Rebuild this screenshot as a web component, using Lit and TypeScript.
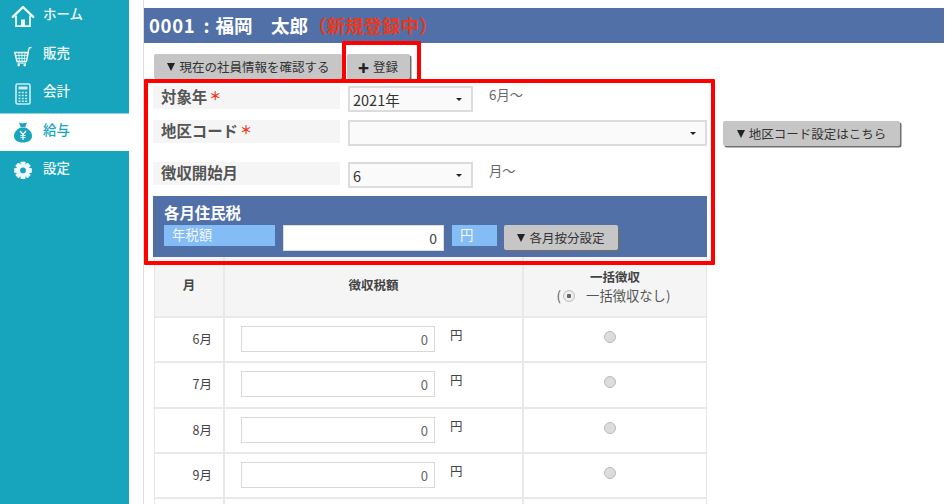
import { LitElement, html, css, svg } from "lit";
import { customElement } from "lit/decorators.js";

const TEETH = [0, 45, 90, 135, 180, 225, 270, 315];

const ICONS: Record<string, unknown> = {
  home: svg`<svg class="ic" viewBox="0 0 24 24" width="24" height="24"><path d="M1.800 12.800 12 3l10.200 9.800" fill="none" stroke="currentColor" stroke-width="2.400" stroke-linecap="round" stroke-linejoin="round"/><path d="M5 11.500V22.200h14V11.500" fill="none" stroke="currentColor" stroke-width="1.800"/><rect x="10" y="15.500" width="4" height="6.700" fill="currentColor"/></svg>`,
  cart: svg`<svg class="ic" viewBox="-2 -4 28 28" width="24" height="24"><path d="M16.500 9l1.500-3 1.500-4.500H22" fill="none" stroke="currentColor" stroke-width="1.500"/><path d="M2.500 7h15.500l-2 10.500H5z" fill="none" stroke="currentColor" stroke-width="1.800"/><path d="M7.200 7l.5 10.500M10.800 7v10.500M14.300 7l-.8 10.500M3.500 10.500h13.500M4.200 14h12" stroke="currentColor" stroke-width="1" fill="none"/><path d="M5.500 19.500h10" stroke="currentColor" stroke-width="1.200"/><circle cx="7" cy="21.800" r="1.500" fill="currentColor"/><circle cx="14" cy="21.800" r="1.500" fill="currentColor"/></svg>`,
  calc: svg`<svg class="ic calc" viewBox="0 -1 24 24" width="24" height="24"><rect x="5" y="2" width="14" height="20" rx="1.500" fill="none" stroke="currentColor" stroke-width="1.600"/><rect x="7.500" y="4.500" width="9" height="3" fill="currentColor"/><path d="M7.500 10.500h9M7.500 13.500h9M7.500 16.500h9M7.500 19.200h9" stroke="currentColor" stroke-width="1.500" stroke-dasharray="2 1.300"/></svg>`,
  bag: svg`<svg class="ic" viewBox="0 0 24 24" width="24" height="24"><path d="M8 2.500c2 1 6 1 8 0l-1.800 4.500h-4.400z" fill="currentColor"/><path d="M9.500 7.500h5c4 2 6.500 5 6.500 8.500 0 4-3.500 6.500-9 6.500S3 20 3 16c0-3.500 2.500-6.500 6.500-8.500z" fill="currentColor"/><path d="M9 11l3 3.500 3-3.500M12 14.500V20M9.500 15.500h5M9.500 17.500h5" stroke="#fff" stroke-width="1.200" fill="none"/></svg>`,
  gear: svg`<svg class="ic" viewBox="-4 -4.500 32 32" width="24" height="24"><g fill="currentColor">${TEETH.map(
    (a) => svg`<rect x="9" y="0.500" width="6" height="23" rx=".8" transform="rotate(${a} 12 12)"/>`
  )}<circle cx="12" cy="12" r="8.500"/></g><circle cx="12" cy="12" r="3.800" fill="#17a5bd"/></svg>`,
};

const NAV = [
  ["home", "ホーム"],
  ["cart", "販売"],
  ["calc", "会計"],
  ["bag", "給与"],
  ["gear", "設定"],
];
const MONTHS = ["6月", "7月", "8月", "9月"];

@customElement("app-root")
export class AppRoot extends LitElement {
  static styles = css`
    :host {
      display: block;
      position: relative;
      width: 952px;
      height: 504px;
      overflow: hidden;
      background: #fff;
      font-family: "Noto Sans CJK JP", "Noto Sans", sans-serif;
      color: #444;
      font-size: 12px;
    }
    .app { display: flex; height: 504px; }
    .side {
      width: 129px;
      flex: none;
      background: #17a5bd;
      color: #f0fafc;
    }
    .nav { margin-top: -3px; }
    .nav-item {
      height: 38.500px;
      display: flex;
      align-items: center;
      gap: 8px;
      padding-left: 11px;
      font-size: 13.500px;
      font-weight: 500;
      box-sizing: border-box;
    }
    .nav-item.on {
      background: #fff;
      color: #17a5bd;
      border-top: 1px solid #8fd3df;
    }
    .nav-item span { position: relative; top: -3px; }
    .ic { flex: none; display: block; }
    .calc { opacity: .85; }
    .main {
      margin-left: 14px;
      width: 801px;
      flex: none;
      border-left: 1px solid #ddd;
      padding-top: 8px;
      box-sizing: border-box;
    }
    .title {
      height: 35px;
      background: #5170a8;
      color: #fff;
      font-size: 18.500px;
      font-weight: 700;
      display: flex;
      align-items: center;
      padding: 0 0 2px 5px;
      box-sizing: border-box;
      white-space: pre;
    }
    .title b { font-weight: 700; letter-spacing: .7px; margin-right: 8px; }
    .title i { font-style: normal; margin-right: 6px; }
    .title em { font-style: normal; color: #e8391d; }
    .actions {
      display: flex;
      gap: 5px;
      padding: 11px 0 0 10px;
      height: 26px;
      box-sizing: content-box;
    }
    .btn {
      height: 25px;
      box-sizing: border-box;
      display: inline-flex;
      align-items: center;
      justify-content: center;
      gap: 4px;
      background: #c6c6c6;
      border-radius: 2px;
      border: 0;
      box-shadow: 1.500px 1.500px 0 #6f6f6f;
      color: #333;
      font-size: 12.500px;
      font-family: inherit;
      white-space: nowrap;
      padding: 0;
    }
    .tri { width: 0; height: 0; border: 4.500px solid transparent; border-top: 8px solid #222; border-bottom: 0; }
    .plus { font-weight: 900; font-size: 18px; line-height: 1; color: #222; }
    .b1 { width: 188px; padding-left: 1px; }
    .b2 { width: 63px; padding-right: 1px; }
    .b3 { width: 177px; }
    .b4 { width: 114px; }
    .form { padding: 6px 0 0 9px; }
    .row {
      display: flex;
      align-items: flex-start;
      gap: 8px;
    }
    .r1 { height: 34px; }
    .r2 { height: 42px; }
    .r3 { height: 34px; }
    .label {
      width: 187px;
      height: 23px;
      background: #f5f5f5;
      color: #555;
      font-size: 15.400px;
      font-weight: 700;
      line-height: 21px;
      padding: 0 0 3px 8px;
      box-sizing: border-box;
      flex: none;
      display: flex;
      align-items: center;
    }
    .req { color: #e8391d; font-size: 12px; font-weight: 700; margin-left: 2px; line-height: 1; }
    .select {
      height: 26px;
      box-sizing: border-box;
      border: 2px solid #dcdcdc;
      background: #fafafa;
      font-size: 14.500px;
      color: #333;
      display: flex;
      align-items: center;
      padding: 0 9px 0 3px;
      flex: none;
    }
    .select::after {
      content: "";
      margin-left: auto;
      border: 3px solid transparent;
      border-top: 3px solid #222;
      border-bottom: 0;
    }
    .s1, .s3 { width: 125px; }
    .s2 { width: 359px; }
    .note { font-size: 13.300px; color: #666; margin-left: 8px; line-height: 18px; }
    .r2 .btn { margin-left: 8px; margin-top: 1px; }
    .band {
      width: 554px;
      height: 61px;
      background: #5170a8;
      box-sizing: border-box;
      padding: 6px 0 0 11px;
      color: #fff;
    }
    .band h3 { margin: 0 0 2px; font-size: 15.400px; line-height: 21px; font-weight: 700; }
    .band-row { display: flex; align-items: flex-start; height: 26px; }
    .chip {
      height: 21px;
      background: #84bcf5;
      color: #f4f9ff;
      font-size: 13.400px;
      line-height: 18px;
      box-sizing: border-box;
      padding-left: 8px;
    }
    .c1 { width: 111px; }
    .c2 { width: 45px; }
    .yen-in {
      width: 161px;
      height: 26px;
      box-sizing: border-box;
      margin: 0 8px 0 8px;
      background: #fff;
      border: 1px solid #ddd;
      color: #444;
      font-size: 14px;
      text-align: right;
      line-height: 25px;
      padding-right: 6px;
    }
    .band .btn { margin-left: 7px; }
    .table {
      margin-left: 1px;
      width: 551px;
      display: grid;
      grid-template-columns: 68px 299px 184px;
      grid-template-rows: 61px repeat(4, 45.300px) 20px;
      border-left: 1px solid #e6e6e6;
      border-right: 1px solid #e6e6e6;
      box-sizing: content-box;
    }
    .cell {
      border-bottom: 2px solid #e9e9e9;
      box-sizing: border-box;
      min-width: 0;
    }
    .cell + .cell { border-left: 2px solid #e9e9e9; }
    .m { border-left: 0 !important; }
    .blank-first { border-left: 0 !important; }
    .head {
      background: #f5f5f5;
      font-size: 12.500px;
      font-weight: 700;
      display: flex;
      flex-direction: column;
      align-items: center;
      justify-content: center;
      color: #444;
    }
    .head-mid { padding-bottom: 4px; }
    .head-last {
      line-height: 19px;
      justify-content: flex-start;
      padding: 10px 0 0 0;
      white-space: nowrap;
    }
    .head-last .opt {
      display: flex;
      align-items: center;
      gap: 2px;
      padding-right: 3px;
      font-weight: 400;
      font-size: 13.300px;
      color: #555;
    }
    .dot-gap { margin-right: 9px; }
    .m {
      font-size: 12.500px;
      color: #444;
      text-align: right;
      padding: 12px 11px 0 0;
      line-height: 18px;
    }
    .amt { display: flex; align-items: flex-start; padding: 8px 0 0 16px; }
    .amt-in {
      width: 194px;
      height: 26px;
      box-sizing: border-box;
      border: 1.500px solid #d8d8d8;
      font-size: 13px;
      text-align: right;
      line-height: 25px;
      padding-right: 6px;
      color: #666;
    }
    .amt span { font-size: 12.500px; margin-left: 15px; line-height: 17px; color: #444; }
    .rad { display: flex; justify-content: center; padding: 13px 10px 0 0; }
    .dot {
      width: 12px;
      height: 12px;
      border-radius: 50%;
      background: #dcdcdc;
      border: 1px solid #bbb;
      box-sizing: border-box;
      display: block;
      flex: none;
    }
    .dot.on {
      background: radial-gradient(circle, #666 0 2px, #eee 2.500px);
    }
    .mark {
      position: absolute;
      border: 4px solid #ff0000;
      box-sizing: border-box;
      pointer-events: none;
      border-radius: 1px;
    }
    .m1 { left: 342px; top: 41px; width: 79px; height: 42px; }
    .m2 { left: 144px; top: 79px; width: 571px; height: 186px; }
  `;

  render() {
    return html`
      <div class="app">
        <aside class="side">
          <nav class="nav">
            ${NAV.map(
              ([k, t]) => html`<div class="nav-item ${k === "bag" ? "on" : ""}">${ICONS[k]}<span>${t}</span></div>`
            )}
          </nav>
        </aside>
        <main class="main">
          <div class="title"><b>0001</b><i>:</i>福岡　太郎<em>（新規登録中）</em></div>
          <div class="actions">
            <button class="btn b1"><i class="tri"></i>現在の社員情報を確認する</button>
            <button class="btn b2"><span class="plus">+</span>登録</button>
          </div>
          <div class="form">
            <div class="row r1">
              <div class="label">対象年<span class="req">＊</span></div>
              <div class="select s1">2021年</div>
              <div class="note">6月～</div>
            </div>
            <div class="row r2">
              <div class="label">地区コード<span class="req">＊</span></div>
              <div class="select s2"></div>
              <button class="btn b3"><i class="tri"></i>地区コード設定はこちら</button>
            </div>
            <div class="row r3">
              <div class="label">徴収開始月</div>
              <div class="select s3">6</div>
              <div class="note">月～</div>
            </div>
            <div class="band">
              <h3>各月住民税</h3>
              <div class="band-row">
                <div class="chip c1">年税額</div>
                <div class="yen-in">0</div>
                <div class="chip c2">円</div>
                <button class="btn b4"><i class="tri"></i>各月按分設定</button>
              </div>
            </div>
            <div class="table">
              <div class="cell head head-mid">月</div>
              <div class="cell head head-mid">徴収税額</div>
              <div class="cell head head-last">
                <div>一括徴収</div>
                <div class="opt">(<i class="dot on dot-gap"></i>一括徴収なし)</div>
              </div>
              ${MONTHS.map(
                (m) => html`
                  <div class="cell m">${m}</div>
                  <div class="cell amt"><div class="amt-in">0</div><span>円</span></div>
                  <div class="cell rad"><i class="dot"></i></div>
                `
              )}
              <div class="cell blank-first"></div>
              <div class="cell"></div>
              <div class="cell"></div>
            </div>
          </div>
        </main>
      </div>
      <div class="mark m1"></div>
      <div class="mark m2"></div>
    `;
  }
}
